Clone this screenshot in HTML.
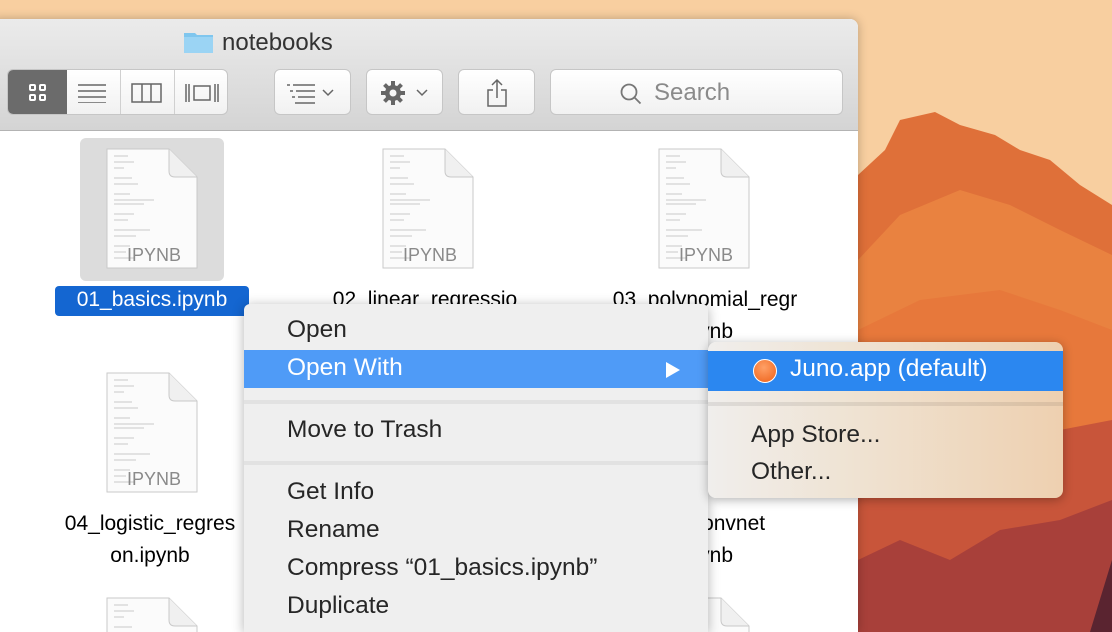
<!DOCTYPE html>
<html style="width:1112px;height:632px;overflow:hidden"><head><meta charset="utf-8"><style>
*{margin:0;padding:0;box-sizing:border-box}
body{width:1112px;height:632px;overflow:hidden;position:relative;font-family:"Liberation Sans",sans-serif;background:#f8cfa0}
.abs{position:absolute}
.win{left:-10px;top:19px;width:868px;height:613px;background:#fff;border-radius:8px 8px 0 0;overflow:hidden;box-shadow:0 0 10px rgba(0,0,0,.25)}
.tb{left:0;top:0;width:868px;height:112px;background:linear-gradient(#ebebeb,#d4d4d4);border-bottom:1px solid #b3b3b3}
.btn{position:absolute;top:50px;height:46px;background:linear-gradient(#fff,#f1f1f1);border:1px solid #c6c6c6;border-radius:6px}
.lbl{position:absolute;font-size:21px;color:#000;text-align:center;white-space:nowrap}
.menu{left:244px;top:304px;width:464px;height:328px;background:#efefef;border-radius:6px 6px 0 0;box-shadow:0 2px 12px rgba(0,0,0,.3)}
.mi{position:absolute;left:43px;font-size:24.5px;color:#262626;white-space:nowrap}
.sub{left:708px;top:342px;width:355px;height:156px;border-radius:8px;background:linear-gradient(90deg,#f0eeec 0%,#efe3d3 40%,#eed0b0 100%);box-shadow:0 2px 10px rgba(0,0,0,.3)}
</style></head><body>
<svg class="abs" style="left:0;top:0" width="1112" height="632">
<rect width="1112" height="632" fill="#f8cfa0"/>
<polygon points="858,175 885,150 900,120 935,112 960,125 995,135 1020,150 1050,160 1080,185 1112,205 1112,632 858,632" fill="#df7039"/>
<polygon points="858,260 900,215 960,190 1010,205 1060,230 1112,255 1112,632 858,632" fill="#e98240"/>
<polygon points="858,330 920,300 1000,290 1060,310 1112,330 1112,632 858,632" fill="#e7783b"/>
<polygon points="858,470 920,440 1000,420 1060,430 1112,420 1112,632 858,632" fill="#c8553a"/>
<polygon points="858,560 900,540 950,560 1000,530 1060,520 1112,500 1112,632 858,632" fill="#a8403a"/>
<polygon points="1090,632 1112,560 1112,632" fill="#5a2430"/>
</svg>
<div class="abs win">
  <div class="abs tb"></div>
  <svg class="abs" style="left:193px;top:11px" width="32" height="24"><path d="M1 3h11l2 2h16v18H1z" fill="#7fc6ee"/><rect x="1" y="7" width="29" height="16" fill="#9bd4f4"/></svg>
  <div class="abs" style="left:232px;top:10px;font-size:24px;color:#333">notebooks</div>
  <div class="btn" style="left:17px;width:221px;overflow:hidden">
    <div class="abs" style="left:0;top:0;width:59px;height:46px;background:#6b6b6b"></div>
    <svg class="abs" style="left:20px;top:13px" width="20" height="20" fill="none" stroke="#fff" stroke-width="2"><rect x="2" y="2" width="5" height="5" rx="1"/><rect x="12" y="2" width="5" height="5" rx="1"/><rect x="2" y="12" width="5" height="5" rx="1"/><rect x="12" y="12" width="5" height="5" rx="1"/></svg>
    <div class="abs" style="left:112px;top:0;width:1px;height:46px;background:#d0d0d0"></div>
    <div class="abs" style="left:166px;top:0;width:1px;height:46px;background:#d0d0d0"></div>
    <svg class="abs" style="left:70px;top:13px" width="30" height="20" stroke="#666" stroke-width="1.5"><path d="M0 2h28M0 8h28M0 14h28M0 20h28"/></svg>
    <svg class="abs" style="left:123px;top:12px" width="32" height="22" fill="none" stroke="#666" stroke-width="1.5"><rect x="1" y="2" width="29" height="18"/><path d="M11 2v18M20 2v18"/></svg>
    <svg class="abs" style="left:176px;top:12px" width="36" height="22" fill="none" stroke="#666" stroke-width="1.5"><path d="M2 2v18M5 2v18M31 2v18M34 2v18"/><rect x="10" y="4" width="16" height="14"/></svg>
  </div>
  <div class="btn" style="left:284px;width:77px"><svg class="abs" style="left:12px;top:12px" width="56" height="22" fill="none" stroke="#666" stroke-width="1.5"><path d="M0 3h3M6 3h22M3 9h3M9 9h19M5 15h3M11 15h17M8 21h20M36 8l5 5 5-5"/></svg></div>
  <div class="btn" style="left:376px;width:77px"><svg class="abs" style="left:12px;top:9px" width="56" height="28"><g fill="#666"><circle cx="14" cy="14" r="8"/><g stroke="#666" stroke-width="4"><path d="M14 2v24M2 14h24M5.5 5.5l17 17M22.5 5.5l-17 17"/></g></g><circle cx="14" cy="14" r="3.5" fill="#f5f5f5"/><path d="M38 11l5 5 5-5" fill="none" stroke="#666" stroke-width="1.5"/></svg></div>
  <div class="btn" style="left:468px;width:77px"><svg class="abs" style="left:26px;top:8px" width="24" height="30" fill="none" stroke="#666" stroke-width="1.5"><path d="M8 12H3v16h18V12h-5M12 20V2M7 7l5-5 5 5"/></svg></div>
  <div class="btn" style="left:560px;width:293px"><svg class="abs" style="left:68px;top:12px" width="24" height="24" fill="none" stroke="#777" stroke-width="1.8"><circle cx="10" cy="10" r="7.5"/><path d="M15.5 15.5l6 6"/></svg><div class="abs" style="left:103px;top:9px;font-size:24px;color:#8a8a8a">Search</div></div>
</div>
<svg width="0" height="0" style="position:absolute"><defs><g id="doc"><path d="M1 1h62l28 28v91H1z" fill="#fbfbfb" stroke="#c9c9c9"/><path d="M63 1v22q0 6 6 6h22" fill="#f0f0f0" stroke="#c9c9c9"/><g stroke="#c8c8c8" stroke-width="1"><path d="M8 8h14M8 14h20M8 20h10M8 30h18M8 36h24M8 46h16M8 52h40M8 56h30M8 66h20M8 72h14M8 82h36M8 88h22M8 98h16M8 104h12M8 110h20"/></g><text x="21" y="113" font-family="Liberation Sans" font-size="18" fill="#8a8a8a">IPYNB</text></g></defs></svg>
<div class="abs" style="left:80px;top:138px;width:144px;height:143px;background:#dcdcdc;border-radius:6px"></div>
<svg class="abs" style="left:106px;top:148px" width="93" height="123"><use href="#doc"/></svg>
<svg class="abs" style="left:382px;top:148px" width="93" height="123"><use href="#doc"/></svg>
<svg class="abs" style="left:658px;top:148px" width="93" height="123"><use href="#doc"/></svg>
<svg class="abs" style="left:106px;top:372px" width="93" height="123"><use href="#doc"/></svg>
<svg class="abs" style="left:106px;top:597px" width="93" height="35"><use href="#doc"/></svg>
<svg class="abs" style="left:658px;top:597px" width="93" height="35"><use href="#doc"/></svg>
<div class="abs" style="left:55px;top:286px;width:194px;height:30px;background:#1466d1;border-radius:4px"></div>
<div class="lbl" style="left:55px;top:288px;width:194px;color:#fff">01_basics.ipynb</div>
<div class="lbl" style="left:300px;top:288px;width:250px">02_linear_regressio</div>
<div class="lbl" style="left:580px;top:288px;width:250px">03_polynomial_regr</div>
<div class="lbl" style="left:580px;top:320px;width:250px">.ipynb</div>
<div class="lbl" style="left:30px;top:512px;width:240px">04_logistic_regres</div>
<div class="lbl" style="left:30px;top:544px;width:240px">on.ipynb</div>
<div class="lbl" style="left:580px;top:512px;width:250px">__n_convnet</div>
<div class="lbl" style="left:580px;top:544px;width:250px">.ipynb</div>
<div class="abs menu">
  <div class="mi" style="top:12px">Open</div>
  <div class="abs" style="left:0;top:46px;width:464px;height:38px;background:#4f9bf7"></div>
  <div class="mi" style="top:50px;color:#fff">Open With</div>
  <svg class="abs" style="left:420px;top:56px" width="18" height="20"><path d="M2 2l14 8-14 8z" fill="#fff"/></svg>
  <div class="abs" style="left:0;top:96px;width:464px;height:4px;background:#e2e2e2"></div>
  <div class="mi" style="top:112px">Move to Trash</div>
  <div class="abs" style="left:0;top:157px;width:464px;height:4px;background:#e2e2e2"></div>
  <div class="mi" style="top:174px">Get Info</div>
  <div class="mi" style="top:212px">Rename</div>
  <div class="mi" style="top:250px">Compress “01_basics.ipynb”</div>
  <div class="mi" style="top:288px">Duplicate</div>
</div>
<div class="abs sub">
  <div class="abs" style="left:0;top:9px;width:355px;height:40px;background:#2b87f0"></div>
  <svg class="abs" style="left:44px;top:16px" width="26" height="26"><defs><radialGradient id="jo" cx=".45" cy=".35" r=".7"><stop offset="0" stop-color="#ffa066"/><stop offset="1" stop-color="#f06a24"/></radialGradient></defs><circle cx="13" cy="13" r="11.5" fill="url(#jo)" stroke="#fff" stroke-width="1"/></svg>
  <div class="mi" style="left:82px;top:13px;color:#fff">Juno.app (default)</div>
  <div class="abs" style="left:0;top:60px;width:355px;height:4px;background:rgba(0,0,0,.08)"></div>
  <div class="mi" style="top:79px">App Store...</div>
  <div class="mi" style="top:116px">Other...</div>
</div>
</body></html>
